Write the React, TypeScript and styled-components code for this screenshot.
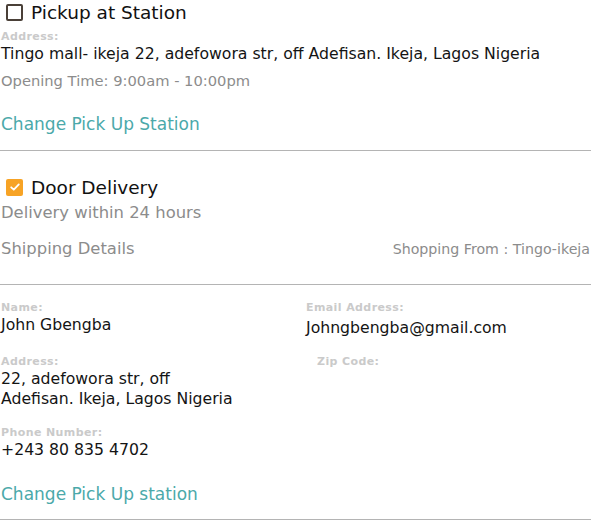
import React from "react";
import styled, { createGlobalStyle } from "styled-components";

const Global = createGlobalStyle`
  html, body { margin: 0; padding: 0; background: #fff; }
  body { font-family: "DejaVu Sans", "Liberation Sans", sans-serif; color: #141414; }
`;

const Page = styled.div`
  width: 591px;
  padding-top: 1px;
`;

const Section = styled.section`
  padding-left: 1px;
  display: flex;
  flex-direction: column;
`;

const OptionRow = styled.label<{ $mt?: number }>`
  box-sizing: border-box;
  display: flex;
  align-items: center;
  gap: 8px;
  padding-left: 5px;
  padding-bottom: 2px;
  margin-top: ${(p) => p.$mt ?? 0}px;
  height: 24px;
  font-size: 18.5px;
  color: #111;
`;

const Box = styled.span<{ $checked?: boolean }>`
  box-sizing: border-box;
  width: 17px;
  height: 17px;
  border-radius: 2px;
  display: inline-flex;
  align-items: center;
  justify-content: center;
  border: ${(p) => (p.$checked ? "none" : "2px solid #4a4038")};
  background: ${(p) => (p.$checked ? "#f7a325" : "transparent")};
`;

const Label = styled.div<{ $mt?: number; $indent?: number }>`
  font-size: 11px;
  font-weight: 600;
  letter-spacing: 0.4px;
  line-height: 14px;
  color: #cacaca;
  margin-top: ${(p) => p.$mt ?? 0}px;
  padding-left: ${(p) => p.$indent ?? 0}px;
`;

const Value = styled.div<{ $mt?: number }>`
  font-size: 15.7px;
  line-height: 20px;
  color: #141414;
  margin-top: ${(p) => p.$mt ?? 0}px;
`;

const Muted = styled.div<{ $mt?: number; $size?: number }>`
  font-size: ${(p) => p.$size ?? 16.4}px;
  line-height: 20px;
  color: #8c8c8c;
  margin-top: ${(p) => p.$mt ?? 0}px;
`;

const LinkText = styled.a<{ $mt?: number }>`
  display: block;
  font-size: 17px;
  line-height: 20px;
  color: #4ba9aa;
  text-decoration: none;
  margin-top: ${(p) => p.$mt ?? 0}px;
`;

const Divider = styled.hr<{ $mt?: number }>`
  border: none;
  border-top: 1px solid #b4b4b4;
  margin: ${(p) => p.$mt ?? 0}px 0 0 0;
  width: 591px;
`;

const HeaderRow = styled.div`
  display: flex;
  justify-content: space-between;
  align-items: center;
  margin-top: 16px;
  padding-right: 1px;
`;

const FromText = styled.span`
  font-size: 14.2px;
  color: #8c8c8c;
`;

const Grid = styled.div`
  display: grid;
  grid-template-columns: 305px 1fr;
  row-gap: 17px;
  margin-top: 16px;
  padding-left: 1px;
`;

const Cell = styled.div``;

const Check = () => (
  <svg width="12" height="12" viewBox="0 0 12 12">
    <path d="M2.2 6.3 L4.8 8.7 L9.8 3.4" fill="none" stroke="#fff" strokeWidth="1.8" strokeLinecap="round" strokeLinejoin="round" />
  </svg>
);

export default function App() {
  return (
    <Page>
      <Global />
      <Section>
        <OptionRow>
          <Box />
          Pickup at Station
        </OptionRow>
        <Label $mt={5}>Address:</Label>
        <Value>Tingo mall- ikeja 22, adefowora str, off Adefisan. Ikeja, Lagos Nigeria</Value>
        <Muted $mt={7} $size={14.7}>Opening Time: 9:00am - 10:00pm</Muted>
        <LinkText $mt={23}>Change Pick Up Station</LinkText>
      </Section>
      <Divider $mt={16} />
      <Section>
        <OptionRow $mt={25}>
          <Box $checked>
            <Check />
          </Box>
          Door Delivery
        </OptionRow>
        <Muted $mt={3}>Delivery within 24 hours</Muted>
        <HeaderRow>
          <Muted>Shipping Details</Muted>
          <FromText>Shopping From : Tingo-ikeja</FromText>
        </HeaderRow>
      </Section>
      <Divider $mt={25} />
      <Grid>
        <Cell>
          <Label>Name:</Label>
          <Value>John Gbengba</Value>
        </Cell>
        <Cell>
          <Label>Email Address:</Label>
          <Value $mt={3}>Johngbengba@gmail.com</Value>
        </Cell>
        <Cell>
          <Label>Address:</Label>
          <Value>
            22, adefowora str, off
            <br />
            Adefisan. Ikeja, Lagos Nigeria
          </Value>
        </Cell>
        <Cell>
          <Label $indent={11}>Zip Code:</Label>
        </Cell>
        <Cell>
          <Label>Phone Number:</Label>
          <Value>+243 80 835 4702</Value>
        </Cell>
      </Grid>
      <Section>
        <LinkText $mt={24}>Change Pick Up station</LinkText>
      </Section>
      <Divider $mt={15} />
    </Page>
  );
}
